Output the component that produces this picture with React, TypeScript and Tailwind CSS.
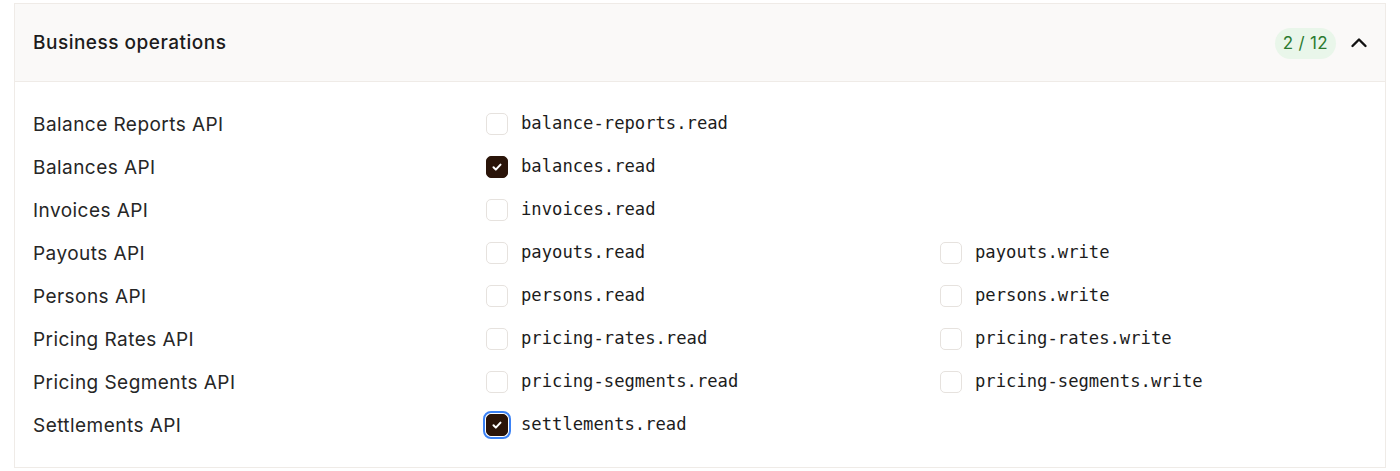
import React, { useState } from 'react';

type Row = { name: string; read: string; write?: string };

const rows: Row[] = [
  { name: 'Balance Reports API', read: 'balance-reports.read' },
  { name: 'Balances API', read: 'balances.read' },
  { name: 'Invoices API', read: 'invoices.read' },
  { name: 'Payouts API', read: 'payouts.read', write: 'payouts.write' },
  { name: 'Persons API', read: 'persons.read', write: 'persons.write' },
  { name: 'Pricing Rates API', read: 'pricing-rates.read', write: 'pricing-rates.write' },
  { name: 'Pricing Segments API', read: 'pricing-segments.read', write: 'pricing-segments.write' },
  { name: 'Settlements API', read: 'settlements.read' },
];

const Check = ({ checked, focused, onClick }: { checked: boolean; focused?: boolean; onClick: () => void }) => (
  <button
    onClick={onClick}
    className={`flex h-[22px] w-[22px] shrink-0 items-center justify-center rounded-[5px] border ${
      checked ? 'border-[#2a1409] bg-[#2a1409]' : 'border-[#e6e2de] bg-white'
    } ${focused ? 'outline-2 outline-offset-1 outline-[#3b82f6]' : ''}`}
  >
    {checked && (
      <svg width="14" height="14" viewBox="0 0 24 24" fill="none" stroke="white" strokeWidth="3.5" strokeLinecap="round" strokeLinejoin="round">
        <path d="M6 12.5l4 4L18 8" />
      </svg>
    )}
  </button>
);

const Scope = ({ label, checked, focused, onToggle }: { label: string; checked: boolean; focused?: boolean; onToggle: () => void }) => (
  <label className="flex items-center gap-[13px]">
    <Check checked={checked} focused={focused} onClick={onToggle} />
    <span className="font-['DejaVu_Sans_Mono',monospace] text-[17.2px] leading-none text-[#1c1c1c]">{label}</span>
  </label>
);

export default function App() {
  const [selected, setSelected] = useState<Record<string, boolean>>({
    'balances.read': true,
    'settlements.read': true,
  });
  const toggle = (k: string) => setSelected(p => ({ ...p, [k]: !p[k] }));
  const count = Object.values(selected).filter(Boolean).length;

  return (
    <div className="min-h-screen bg-white pt-[3px] font-['Inter',sans-serif]">
      <div className="mx-[14px] border border-[#efebe7]">
        {/* Header */}
        <div className="flex h-[78px] items-center justify-between border-b border-[#efebe7] bg-[#faf9f8] pl-[18px] pr-[14px]">
          <h3 className="mt-[2px] text-[19px] tracking-[0.5px] text-[#1c1c1c] [font-weight:450]">Business operations</h3>
          <div className="mt-[1px] flex items-center gap-[11px]">
            <span className="rounded-full bg-[#e9f6ea] px-[8px] py-[5px] text-[17px] leading-[21px] tracking-[0.3px] text-[#2b7a2f]">
              {count} / 12
            </span>
            <svg width="24" height="24" viewBox="0 0 24 24" fill="none" stroke="#111" strokeWidth="2.4" strokeLinecap="round" strokeLinejoin="round">
              <path d="M5.5 15l6.5-6.5 6.5 6.5" />
            </svg>
          </div>
        </div>

        {/* Body */}
        <div className="px-[18px] pb-[21px] pt-[20px]">
          {rows.map(r => (
            <div key={r.name} className="grid h-[43px] grid-cols-[453px_454px_1fr] items-center">
              <span className="mt-[4px] text-[19px] tracking-[0.45px] text-[#262626]">{r.name}</span>
              <Scope
                label={r.read}
                checked={!!selected[r.read]}
                focused={r.read === 'settlements.read'}
                onToggle={() => toggle(r.read)}
              />
              {r.write ? (
                <Scope label={r.write} checked={!!selected[r.write]} onToggle={() => toggle(r.write!)} />
              ) : (
                <span />
              )}
            </div>
          ))}
        </div>
      </div>
    </div>
  );
}
